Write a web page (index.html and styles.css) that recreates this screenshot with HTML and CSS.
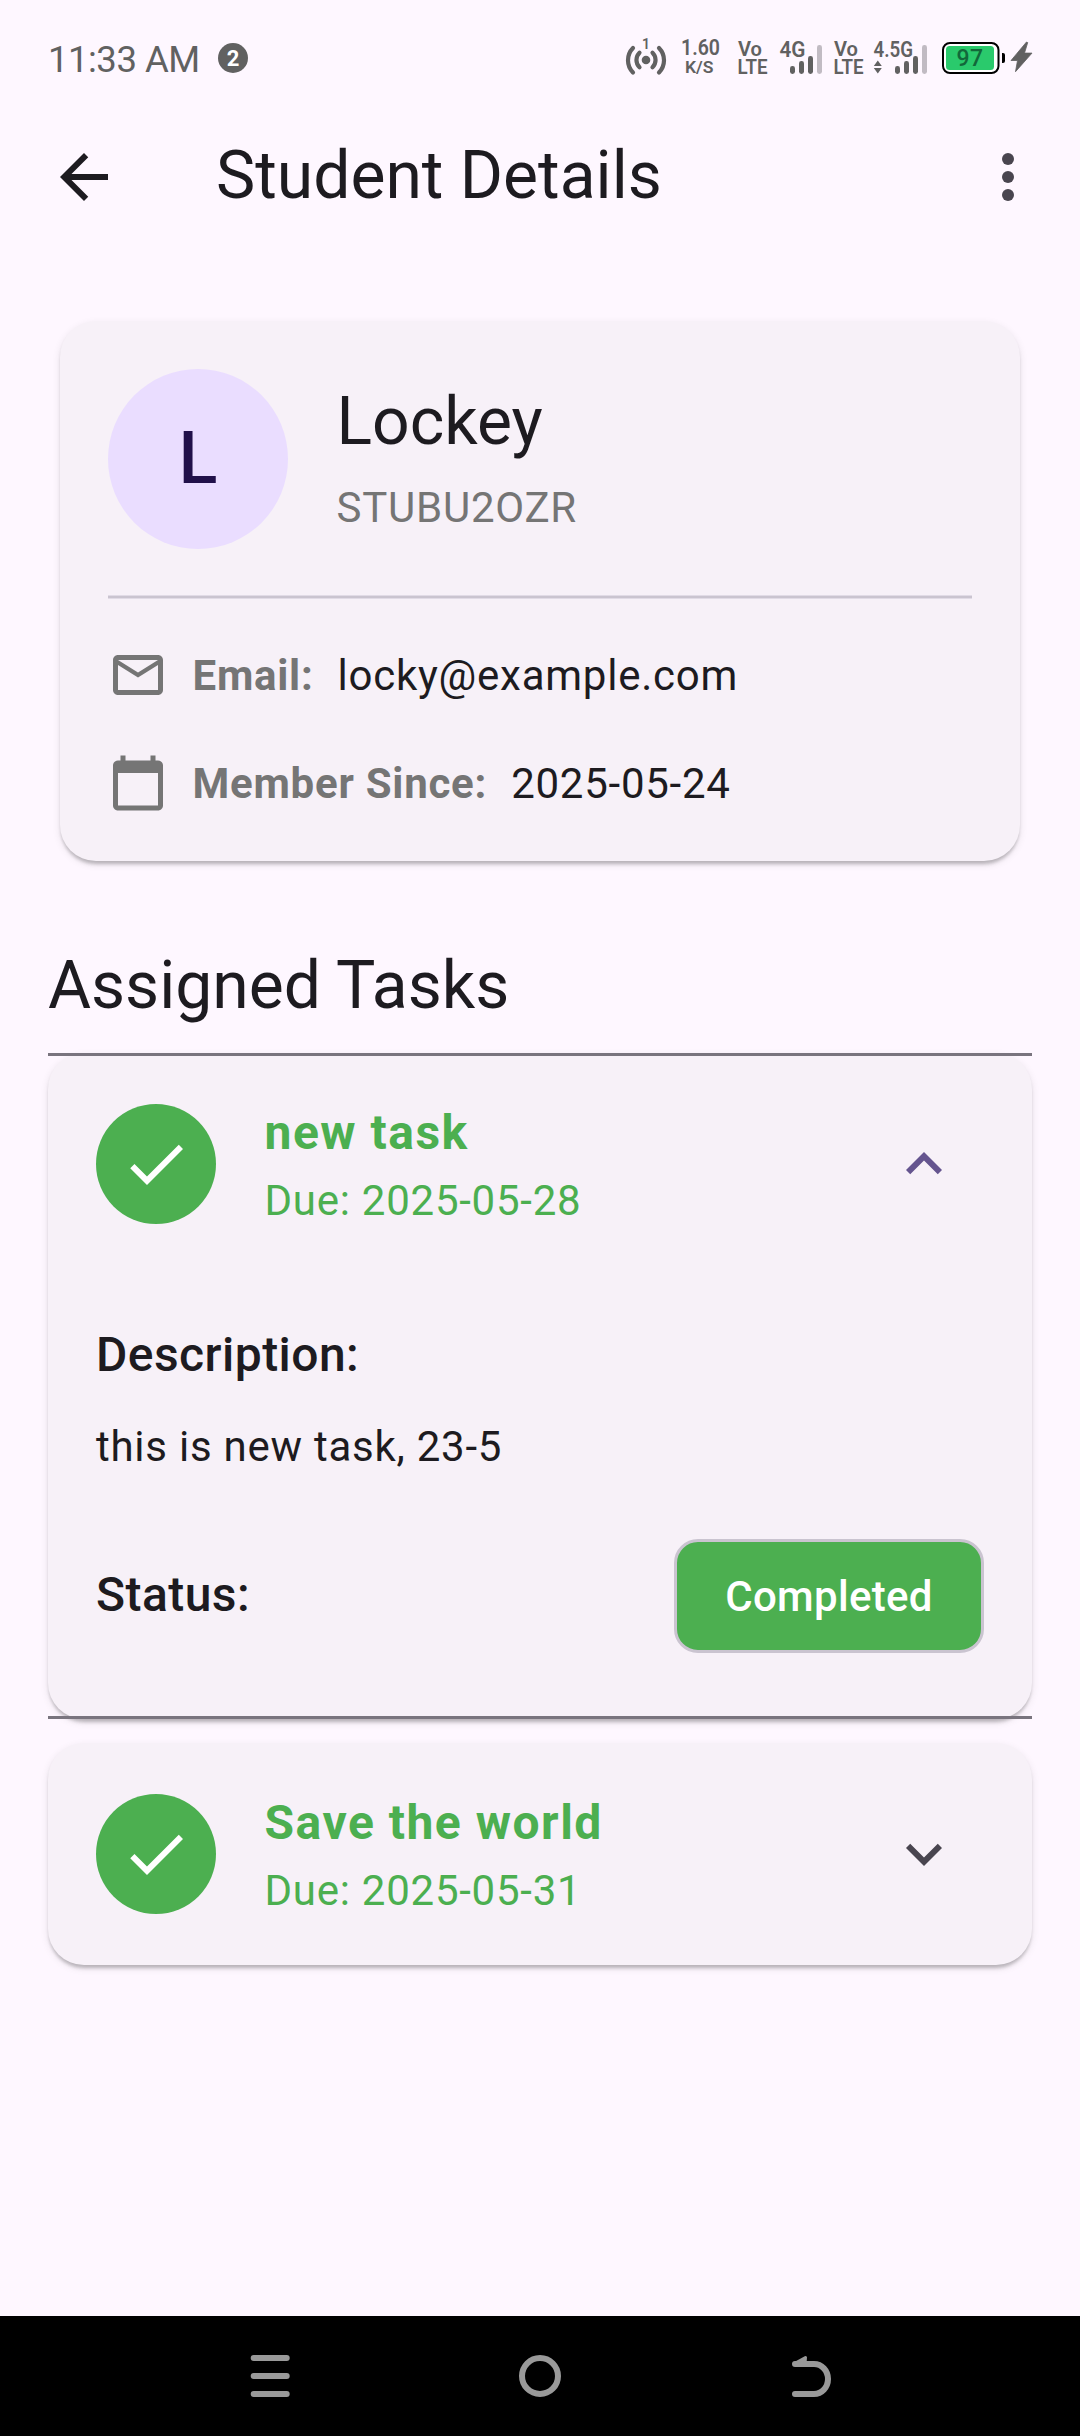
FILE: index.html
```html
<!DOCTYPE html>
<html lang="en">
<head>
<meta charset="utf-8">
<title>Student Details</title>
<link rel="stylesheet" href="styles.css">
</head>
<body>
<div class="screen">
  <div class="statusbar">
    <span class="clock">11:33 AM</span>
    <span class="count">2</span>
    <svg class="status-icons" width="412" height="93" viewBox="624 0 412 93">
      <g fill="none" stroke="#616161" stroke-width="4.2" stroke-linecap="round">
        <path d="M639.5 52.800a10 10 0 0 0 0 14.400M652.500 52.800a10 10 0 0 1 0 14.400"/>
        <path d="M633 48a17.500 17.500 0 0 0 0 24.500M659 48a17.500 17.500 0 0 1 0 24.500"/>
      </g>
      <circle cx="646" cy="60" r="4.300" fill="#616161"/>
      <g class="status-text">
        <text x="642" y="49" font-size="14">1</text>
        <text x="681" y="55" font-size="21.500" textLength="39" lengthAdjust="spacingAndGlyphs">1.60</text>
        <text x="685" y="73" font-size="17" textLength="28.500" lengthAdjust="spacingAndGlyphs">K/S</text>
        <text x="738" y="56" font-size="20" textLength="24" lengthAdjust="spacingAndGlyphs">Vo</text>
        <text x="737.500" y="73.700" font-size="19.500" textLength="30" lengthAdjust="spacingAndGlyphs">LTE</text>
        <text x="779.500" y="57" font-size="22" textLength="26" lengthAdjust="spacingAndGlyphs">4G</text>
        <text x="834" y="56" font-size="20" textLength="24" lengthAdjust="spacingAndGlyphs">Vo</text>
        <text x="833.500" y="73.700" font-size="19.500" textLength="30" lengthAdjust="spacingAndGlyphs">LTE</text>
        <text x="873.500" y="57" font-size="22" textLength="39.500" lengthAdjust="spacingAndGlyphs">4.5G</text>
      </g>
      <g fill="#616161">
        <rect x="790" y="66" width="5" height="8" rx="2.400"/><rect x="799" y="61" width="5" height="13" rx="2.400"/><rect x="808" y="56" width="5" height="18" rx="2.400"/>
        <rect x="895" y="66" width="5" height="8" rx="2.400"/><rect x="904" y="61" width="5" height="13" rx="2.400"/><rect x="913" y="56" width="5" height="18" rx="2.400"/>
        <path d="M877.800 60.500l4 5.500h-8zM877.800 73.500l4-5.500h-8z"/>
        <path d="M1026.500 42l-15.500 18.500h6.500l-2 11.200 16.500-18.600h-7.500l3.200-10.500z" stroke="#616161" stroke-width=".8" stroke-linejoin="round"/>
      </g>
      <g fill="#c1bbc3"><rect x="817" y="45" width="5" height="29" rx="2.400"/><rect x="922" y="45" width="5" height="29" rx="2.400"/></g>
      <rect x="943" y="43" width="55.500" height="30" rx="7" fill="#fff" stroke="#000" stroke-width="2"/>
      <rect x="946" y="46" width="48" height="24" rx="3.500" fill="#2aca6c"/>
      <path d="M1002 53h1q2 0 2 2v6q0 2-2 2h-1z"/>
      <text class="level" x="956.500" y="66" font-size="23" textLength="26.500">97</text>
    </svg>
  </div>

  <header class="appbar">
    <svg class="icon" viewBox="0 0 24 24" fill="#1d1b20"><path d="M20 11H7.830l5.590-5.590L12 4l-8 8 8 8 1.410-1.410L7.830 13H20v-2z"/></svg>
    <h1 class="heading">Student Details</h1>
    <svg class="icon" viewBox="0 0 24 24" fill="#49454f"><circle cx="12" cy="6" r="2"/><circle cx="12" cy="12" r="2"/><circle cx="12" cy="18" r="2"/></svg>
  </header>

  <main class="content">
    <section class="card profile">
      <div class="person">
        <div class="avatar">L</div>
        <div class="names">
          <h2 class="heading">Lockey</h2>
          <p class="body muted code">STUBU2OZR</p>
        </div>
      </div>
      <hr class="divider">
      <div class="field">
        <svg class="icon-sm" viewBox="0 0 24 24" fill="#757575"><path d="M20 4H4c-1.100 0-1.990.900-1.990 2L2 18c0 1.100.900 2 2 2h16c1.100 0 2-.900 2-2V6c0-1.100-.900-2-2-2zm0 14H4V8l8 5 8-5v10zm-8-7L4 6h16l-8 5z"/></svg>
        <span class="body label">Email:</span><span class="body">locky@example.com</span>
      </div>
      <div class="field">
        <svg class="icon-sm" viewBox="0 0 24 24" fill="#757575"><path d="M20 3h-1V1h-2v2H7V1H5v2H4c-1.100 0-2 .900-2 2v16c0 1.100.900 2 2 2h16c1.100 0 2-.900 2-2V5c0-1.100-.900-2-2-2zm0 18H4V8h16v13z"/></svg>
        <span class="body label">Member Since:</span><span class="body">2025-05-24</span>
      </div>
    </section>

    <h2 class="heading section-title">Assigned Tasks</h2>

    <article class="card task open">
      <div class="tile">
        <span class="check"><svg class="icon" viewBox="0 0 24 24" fill="#fff"><path d="M9 16.170L4.830 12l-1.420 1.410L9 19 21 7l-1.410-1.410z"/></svg></span>
        <div class="tile-text"><h3 class="task-name">new task</h3><p class="body due">Due: 2025-05-28</p></div>
        <svg class="icon" viewBox="0 0 24 24" fill="#65558f"><path d="M12 8l-6 6 1.410 1.410L12 10.830l4.590 4.580L18 14z"/></svg>
      </div>
      <div class="details">
        <h4 class="subhead">Description:</h4>
        <p class="body description">this is new task, 23-5</p>
        <div class="status-row"><h4 class="subhead">Status:</h4><button class="chip">Completed</button></div>
      </div>
    </article>

    <article class="card task">
      <div class="tile">
        <span class="check"><svg class="icon" viewBox="0 0 24 24" fill="#fff"><path d="M9 16.170L4.830 12l-1.420 1.410L9 19 21 7l-1.410-1.410z"/></svg></span>
        <div class="tile-text"><h3 class="task-name">Save the world</h3><p class="body due">Due: 2025-05-31</p></div>
        <svg class="icon" viewBox="0 0 24 24" fill="#49454f"><path d="M16.590 8.590L12 13.170 7.410 8.590 6 10l6 6 6-6z"/></svg>
      </div>
    </article>
  </main>

  <nav class="navbar">
    <svg width="48" height="48" viewBox="0 0 48 48"><path d="M7.700 6h33M7.700 24h33M7.700 42h33"/></svg>
    <svg width="48" height="48" viewBox="0 0 48 48"><circle cx="24" cy="24" r="18"/></svg>
    <svg width="48" height="48" viewBox="0 0 48 48"><path d="M9 42H28a14 15 0 0 0 0-30H9" stroke-linejoin="round"/><path d="M8.500 11.500L19.500 5.500L19 12z" fill="#999" stroke-width="3" stroke-linejoin="round"/></svg>
  </nav>
</div>
</body>
</html>
```
FILE: styles.css
```css
* { box-sizing: border-box; margin: 0; padding: 0; }

body {
  background: #fef7ff;
  color: #1d1b20;
  font-family: Roboto, "Liberation Sans", sans-serif;
}

.screen { display: flex; flex-direction: column; width: 1080px; height: 2436px; }

.statusbar { display: flex; height: 93px; padding-left: 48px; color: #616161; }
.clock { width: 170px; font-size: 36.5px; line-height: 119px; letter-spacing: -.5px; white-space: nowrap; }
.count {
  width: 30px; height: 30px; margin-top: 43px; border-radius: 50%;
  background: #616161; color: #fff; font-size: 22px; font-weight: 700;
  line-height: 31px; text-align: center;
}
.status-icons { display: block; margin-left: 376px; }
.status-text { fill: #616161; font-weight: 600; }
.level { fill: #12683a; font-weight: 500; }

.icon { display: block; flex: none; width: 72px; height: 72px; }
.icon-sm { display: block; flex: none; width: 60px; height: 60px; margin-right: 24px; }

.heading { font-size: 66px; font-weight: 400; line-height: 84px; }
.body { font-size: 42px; line-height: 60px; letter-spacing: .75px; }
.subhead { font-size: 48px; font-weight: 500; line-height: 72px; letter-spacing: .45px; }

.appbar { display: flex; align-items: center; height: 168px; padding: 0 36px 0 48px; }
.appbar .heading { flex: 1; margin-left: 96px; padding-bottom: 2px; }

.content { flex: 1; padding: 60px 48px 0; }

.card {
  border-radius: 36px;
  background: #f7f1f8;
  box-shadow: 0 6px 4px -3px rgba(0, 0, 0, .14), 0 3px 3px rgba(0, 0, 0, .1), 0 3px 9px rgba(0, 0, 0, .09);
}

.profile { height: 540px; margin: 0 12px; padding: 48px; }
.person { display: flex; gap: 48px; }
.avatar {
  width: 180px; height: 180px; border-radius: 50%;
  background: #eaddff; color: #21104a;
  font-size: 72px; font-weight: 500; line-height: 180px; text-align: center;
}
.names { padding: 11px 0 0 .5px; }
.code { margin-top: 14px; }
.muted { color: #757575; }
.divider {
  height: 4px; margin: 46px 0; border: 0;
  background: linear-gradient(#e1dbe6 1px, #cac4d0 1px 3px, #e1dbe6 3px);
}
.field { display: flex; }
.field .body { height: 60px; padding-top: 1px; }
.field + .field { margin-top: 48px; }
.field .label { margin-right: 24px; padding-left: .5px; color: #757575; font-weight: 700; }

.section-title { margin: 83px 0 25px; }

.task + .task { margin-top: 24px; }
.open { position: relative; height: 666px; }
/* Divider lines of an expanded tile run square across the rounded corners */
.open::before, .open::after {
  content: ""; position: absolute; left: 0; right: 0; height: 3px; background: #79747e;
}
.open::before { top: 0; }
.open::after { bottom: 0; }

.tile { display: flex; align-items: center; height: 222px; padding: 0 72px 0 48px; color: #4caf50; }
.check {
  display: flex; align-items: center; justify-content: center;
  width: 120px; height: 120px; border-radius: 50%; background: #4caf50;
}
.tile-text { flex: 1; margin-left: 48.5px; padding-top: 2px; }
.task-name { font-size: 48px; font-weight: 700; line-height: 66px; letter-spacing: 1.5px; }
.due { margin-top: 5px; }

.details { padding: 44px 48px 0; }
.description { margin: 26px 0 62px; }
.status-row { display: flex; align-items: center; justify-content: space-between; }
.status-row .subhead { padding-bottom: 3px; }
.chip {
  width: 310px; height: 114px; padding-top: 1px; border: 3px solid #cac4d0; border-radius: 24px;
  background: #4caf50; color: #fff;
  font: 500 42px/60px Roboto, "Liberation Sans", sans-serif; letter-spacing: .3px;
}

.navbar { display: flex; align-items: center; gap: 222px; height: 120px; padding-left: 246px; background: #000; }
.navbar svg { fill: none; stroke: #999; stroke-width: 6; stroke-linecap: round; }
```
